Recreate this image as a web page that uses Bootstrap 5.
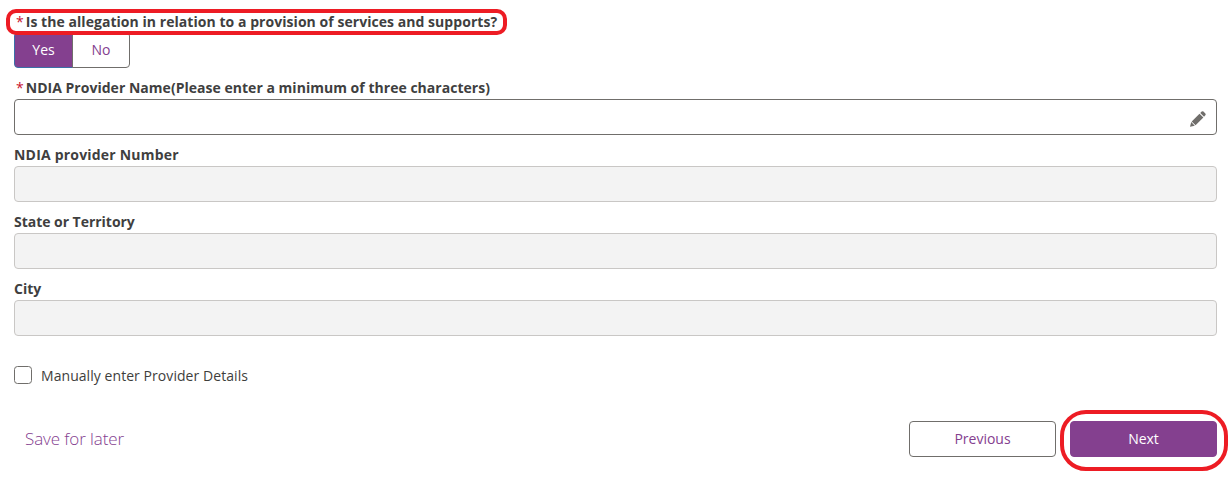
<!DOCTYPE html>
<html lang="en">
<head>
<meta charset="utf-8">
<title>Provider details</title>
<link href="https://cdn.jsdelivr.net/npm/bootstrap@5.3.0/dist/css/bootstrap.min.css" rel="stylesheet">
<style>
:root{--plum:#84408f;--ink:#3e3e3c;--edge:#706e6b;--alert:#ed1c24}
body{font-family:"Open Sans","Noto Sans",sans-serif;font-size:14px;color:var(--ink);background:#fff}
.page{padding:10px 14px 24px}
.field{margin-bottom:9px}
.form-label{display:block;height:22px;line-height:21px;font-size:14px;font-weight:700;margin:0;white-space:nowrap;color:#403f3f}
.form-label.question{line-height:23px}
.req{color:#c8102e;font-weight:400;margin:0 2px 0 2px}
.q1{letter-spacing:.05px}
.q2{letter-spacing:.025px}
.q3{letter-spacing:.2px}
.q4{letter-spacing:-.03px}
.form-control{height:36px;border:1px solid var(--edge);border-radius:4px;padding:0 36px 0 12px}
.form-control:disabled{background:#f3f3f3;border-color:#c9c7c5}
.pencil{right:11px;top:12px;width:16px;height:16px}
.ring{border:4px solid var(--alert);pointer-events:none;z-index:3}
.ring-question{left:-8px;top:-1px;width:501px;height:26px;border-radius:10px}
.ring-next{left:-10px;top:-11px;width:168px;height:61px;border-radius:26px}
.choice .btn{height:36px;padding:0;font-size:14px;border:1px solid var(--edge);border-radius:4px;line-height:34px;color:var(--plum)}
.choice .yes{width:59px;background:var(--plum);color:#fff;border-color:#3b70a8}
.choice .no{width:58px}
.form-check-input{width:18px;height:18px;margin:0;border:1px solid var(--edge);border-radius:2px}
.manual{margin-top:29px;height:20px;gap:9px;letter-spacing:.06px}
.actions{margin-top:36px;height:36px}
.save{font-size:17px;font-weight:300;color:var(--plum);margin-left:11px;letter-spacing:-.1px}
.step{width:147px;height:36px;padding:0;font-size:14px;line-height:34px;border-radius:4px;border:1px solid var(--edge);color:var(--plum)}
.step.go{background:var(--plum);border-color:var(--plum);color:#fff}
.steps{gap:14px}
</style>
</head>
<body>
<main class="page">
  <div class="field position-relative">
    <span class="form-label question"><span class="req">*</span><span class="q1">Is the allegation in relation to a provision of services and supports?</span></span>
    <div class="btn-group choice d-flex" role="group">
      <button class="btn yes flex-grow-0">Yes</button><button class="btn no flex-grow-0">No</button>
    </div>
    <div class="ring ring-question position-absolute"></div>
  </div>
  <div class="field">
    <label class="form-label" for="name"><span class="req">*</span><span class="q2">NDIA Provider Name(Please enter a minimum of three characters)</span></label>
    <div class="position-relative">
      <input id="name" class="form-control" type="text">
      <svg class="pencil position-absolute" viewBox="0 0 17 17" fill="#706e6b"><path d="M0 16.8 1.3 11.8 5.1 15.6ZM1.8 11.1 10.1 2.8 14.2 6.9 5.9 15.2ZM10.9 2 12.4.6Q13.4-.2 14.3.6L16.3 2.6Q17.1 3.5 16.3 4.5L14.9 6Z"/></svg>
    </div>
  </div>
  <div class="field">
    <label class="form-label" for="num"><span class="q3">NDIA provider Number</span></label>
    <input id="num" class="form-control" disabled>
  </div>
  <div class="field">
    <label class="form-label" for="state"><span class="q4">State or Territory</span></label>
    <input id="state" class="form-control" disabled>
  </div>
  <div class="field">
    <label class="form-label" for="city">City</label>
    <input id="city" class="form-control" disabled>
  </div>
  <div class="manual d-flex align-items-center">
    <input id="manual" class="form-check-input" type="checkbox">
    <label for="manual">Manually enter Provider Details</label>
  </div>
  <div class="actions d-flex align-items-center">
    <a class="save text-decoration-none me-auto" href="#">Save for later</a>
    <div class="steps d-flex">
      <button class="btn step">Previous</button>
      <div class="position-relative">
        <button class="btn step go">Next</button>
        <div class="ring ring-next position-absolute"></div>
      </div>
    </div>
  </div>
</main>
<script src="https://cdn.jsdelivr.net/npm/bootstrap@5.3.0/dist/js/bootstrap.bundle.min.js"></script>
</body>
</html>
